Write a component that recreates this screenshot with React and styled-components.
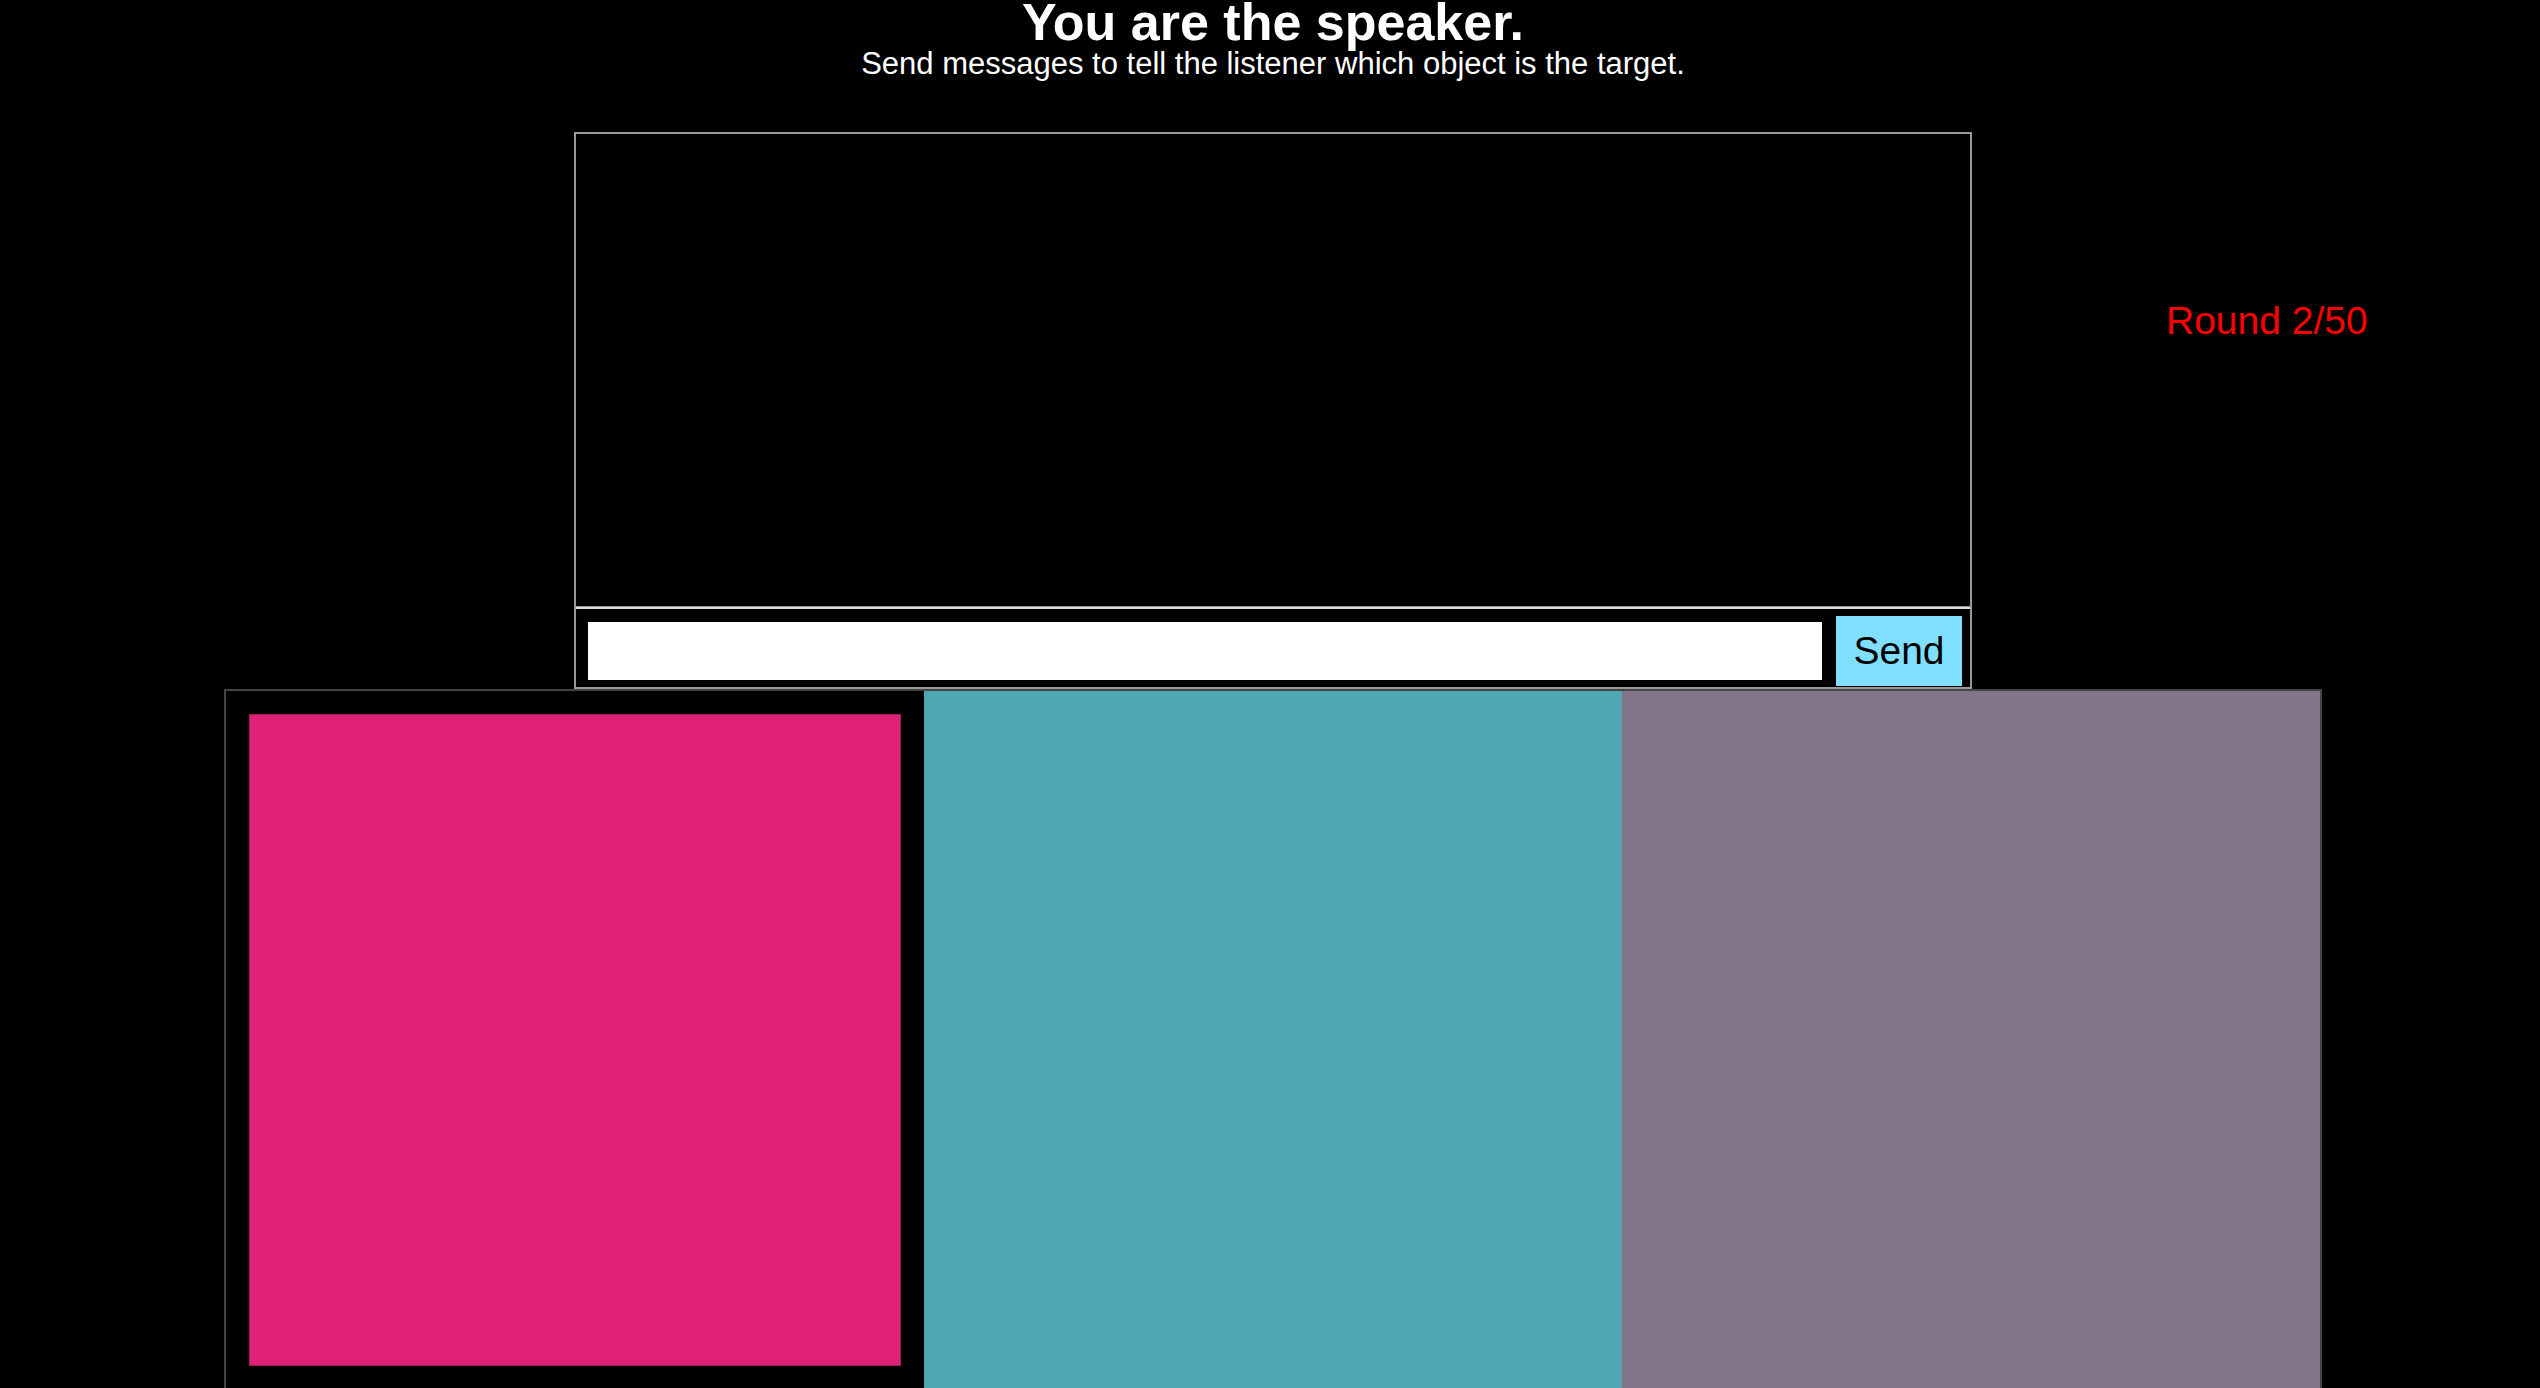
import React from 'react';
import styled, { createGlobalStyle } from 'styled-components';

const GlobalStyle = createGlobalStyle`
body {
    margin: 0;
    background-color: #000;
    font-family: 'Liberation Sans', Arial, Helvetica, sans-serif;
}
`;

const objects = [
    { id: 1, color: '#df2177', target: true },
    { id: 2, color: '#50a6b2', target: false },
    { id: 3, color: '#827489', target: false },
];

export const App = () => {
    return (
        <Page>
            <GlobalStyle />
            <Header>
                <Title>You are the speaker.</Title>
                <Subtitle>Send messages to tell the listener which object is the target.</Subtitle>
            </Header>

            <TopRow>
                <div />
                <ChatBox>
                    <Messages />
                    <Form onSubmit={(e) => e.preventDefault()}>
                        <Input type="text" />
                        <SendButton type="submit">Send</SendButton>
                    </Form>
                </ChatBox>
                <RoundLabel>Round 2/50</RoundLabel>
            </TopRow>

            <Board>
                {objects.map((o) => (
                    <Cell key={o.id} target={o.target}>
                        <Swatch color={o.color} target={o.target} />
                    </Cell>
                ))}
            </Board>
        </Page>
    );
};

export default App;

const Page = styled.div`
box-sizing: border-box;
width: 100%;
padding-left: 6px;
display: flex;
flex-direction: column;
align-items: center;
color: #fff;
`;

const Header = styled.div`
display: flex;
flex-direction: column;
align-items: center;
`;

const Title = styled.h1`
margin: -3px 0 0;
font-size: 52px;
line-height: 50px;
font-weight: bold;
`;

const Subtitle = styled.p`
margin: 0;
font-size: 31px;
line-height: 34px;
`;

const TopRow = styled.div`
width: 100%;
margin-top: 51px;
display: grid;
grid-template-columns: 1fr 1398px 1fr;
align-items: start;
`;

const ChatBox = styled.div`
box-sizing: border-box;
width: 1398px;
border: 2px solid #999;
display: flex;
flex-direction: column;
`;

const Messages = styled.div`
height: 472px;
border-bottom: 1px solid #999;
`;

const Form = styled.form`
box-sizing: border-box;
height: 80px;
border-top: 2px solid #ddd;
padding: 5px 8px 0 12px;
display: flex;
align-items: center;
gap: 14px;
`;

const Input = styled.input`
flex: 1;
height: 58px;
box-sizing: border-box;
border: none;
outline: none;
background-color: #fff;
font-size: 30px;
padding: 0 8px;
`;

const SendButton = styled.button`
box-sizing: border-box;
width: 126px;
height: 70px;
border: none;
padding: 0;
background-color: #80dfff;
color: #000;
font-family: 'Liberation Sans', Arial, Helvetica, sans-serif;
font-size: 39px;
cursor: pointer;
`;

const RoundLabel = styled.div`
padding: 167px 0 0 194px;
color: #f00;
font-size: 39px;
`;

const Board = styled.div`
display: grid;
grid-template-columns: repeat(3, 698px);
border: 2px solid #444;
`;

const Cell = styled.div`
box-sizing: border-box;
height: 698px;
padding: ${(p) => (p.target ? '23px' : '0')};
background-color: #000;
display: flex;
`;

const Swatch = styled.div`
flex: 1;
background-color: ${(p) => p.color};
box-shadow: ${(p) => (p.target ? 'inset 0 0 0 1px rgba(0, 0, 0, 0.25)' : 'none')};
`;
